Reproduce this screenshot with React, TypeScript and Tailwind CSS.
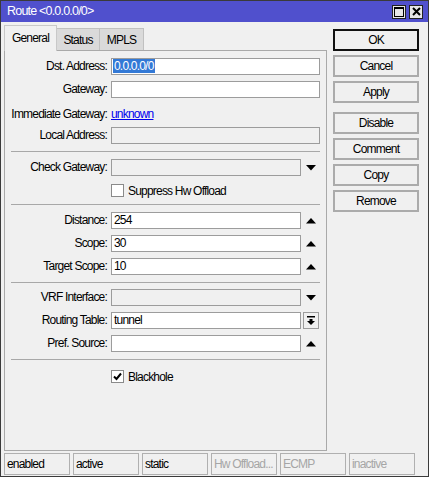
import React from "react";

const FONT = "font-['Liberation_Sans',Arial,sans-serif]";

function Down() {
  return (
    <svg width="10" height="6" viewBox="0 0 10 6">
      <polygon points="0,0 10,0 5,5.5" fill="#000" />
    </svg>
  );
}
function Up() {
  return (
    <svg width="10" height="6" viewBox="0 0 10 6">
      <polygon points="0,5.5 10,5.5 5,0" fill="#000" />
    </svg>
  );
}

function Label({ children }: { children: React.ReactNode }) {
  return <div className="w-[96px] shrink-0 flex justify-end leading-[17px] whitespace-nowrap">{children}</div>;
}

function Input({ value, disabled, w = "w-[209px]", selected }: { value?: string; disabled?: boolean; w?: string; selected?: boolean }) {
  return (
    <div
      className={`${w} h-[17px] border border-[#9c9c9c] ${disabled ? "bg-[#f0f0f0]" : "bg-white"} pl-[1px] leading-[15px] whitespace-nowrap overflow-hidden`}
    >
      {selected ? (
        <span className="bg-[#3379d6] text-white px-[1px] inline-block leading-[14px]">{value}</span>
      ) : (
        <span className="pl-[1px]">{value}</span>
      )}
    </div>
  );
}

function Row({ label, children, className = "" }: { label: string; children: React.ReactNode; className?: string }) {
  return (
    <div className={`flex items-center h-[17px] ${className}`}>
      <Label>{label}</Label>
      <div className="ml-[4px] flex items-center">{children}</div>
    </div>
  );
}

function Sep({ className = "" }: { className?: string }) {
  return <div className={`h-px bg-[#a8a8a8] w-[309px] ${className}`} />;
}

function Check({ checked }: { checked?: boolean }) {
  return (
    <div className="w-[13px] h-[13px] border border-[#8a8a8a] bg-white flex items-center justify-center">
      {checked && (
        <svg width="9" height="9" viewBox="0 0 9 9">
          <polyline points="1,4.5 3.5,7 8,1.5" fill="none" stroke="#000" strokeWidth="2" />
        </svg>
      )}
    </div>
  );
}

function Btn({ children, primary, className = "" }: { children: React.ReactNode; primary?: boolean; className?: string }) {
  return (
    <div
      className={`h-[22px] w-[86px] flex items-center justify-center bg-[#f0f0f0] ${
        primary ? "border-2 border-[#111]" : "border-2 border-[#ababab]"
      } ${className}`}
    >
      {children}
    </div>
  );
}

function Cell({ children, dim }: { children: React.ReactNode; dim?: boolean }) {
  return (
    <div className={`w-[66px] h-[22px] border border-[#b0b0b0] pl-[2px] leading-[20px] whitespace-nowrap overflow-hidden ${dim ? "text-[#a6a6a6]" : "text-black"}`}>
      {children}
    </div>
  );
}

export default function App() {
  return (
    <div className={`w-[429px] h-[477px] bg-[#f0f0f0] border border-[#3a3a3a] flex flex-col overflow-hidden text-[12px] tracking-[-0.8px] text-black ${FONT}`}>
      {/* title bar */}
      <div className="h-[21px] bg-[#5050cd] flex items-center pl-[6px] pr-[5px] text-white text-[12.5px] tracking-[-0.8px] shrink-0">
        <span className="flex-1 leading-[21px]">Route &lt;0.0.0.0/0&gt;</span>
        <div className="flex gap-[3px]">
          <div className="w-[14px] h-[14px] bg-[#e6e6e6] border border-[#222] flex items-center justify-center">
            <svg width="10" height="10" viewBox="0 0 10 10">
              <rect x="0.5" y="0.5" width="9" height="9" fill="none" stroke="#000" strokeWidth="1" />
              <rect x="0" y="0" width="10" height="2" fill="#000" />
            </svg>
          </div>
          <div className="w-[14px] h-[14px] bg-[#e6e6e6] border border-[#222] flex items-center justify-center">
            <svg width="9" height="9" viewBox="0 0 9 9">
              <path d="M1 1 L8 8 M8 1 L1 8" stroke="#000" strokeWidth="2" />
            </svg>
          </div>
        </div>
      </div>

      <div className="flex flex-1 min-h-0">
        {/* left tabs + panel */}
        <div className="ml-[3px] w-[323px] flex flex-col">
          <div className="mt-[3px] h-[25px] flex items-end shrink-0">
            <div className="h-[26px] w-[53px] bg-[#f0f0f0] border border-b-0 border-[#c8c8c8] flex items-center justify-center -mb-px relative z-10 leading-none pb-[2px]">
              General
            </div>
            <div className="h-[22px] w-[43px] bg-[#dadada] border border-b-0 border-l-0 border-[#c0c0c0] flex items-center justify-center">
              Status
            </div>
            <div className="h-[22px] w-[44px] bg-[#dadada] border border-b-0 border-l-0 border-[#c0c0c0] flex items-center justify-center">
              MPLS
            </div>
          </div>
          <div className="h-[401px] border border-[#a9a9a9] flex flex-col pl-[6px] pt-[7px]">
            <Row label="Dst. Address:">
              <Input value="0.0.0.0/0" selected />
            </Row>
            <Row label="Gateway:" className="mt-[6px]">
              <Input />
            </Row>
            <Row label="Immediate Gateway:" className="mt-[8px]">
              <span className="text-[#0000ee] underline leading-[17px]">unknown</span>
            </Row>
            <Row label="Local Address:" className="mt-[4px]">
              <Input disabled />
            </Row>
            <Sep className="mt-[7px]" />
            <Row label="Check Gateway:" className="mt-[7px]">
              <Input disabled w="w-[190px]" />
              <div className="w-[19px] flex justify-center"><Down /></div>
            </Row>
            <div className="flex items-center h-[17px] mt-[6px] pl-[100px]">
              <Check />
              <span className="ml-[4px]">Suppress Hw Offload</span>
            </div>
            <Sep className="mt-[5px]" />
            <Row label="Distance:" className="mt-[7px]">
              <Input value="254" w="w-[190px]" />
              <div className="w-[19px] flex justify-center"><Up /></div>
            </Row>
            <Row label="Scope:" className="mt-[6px]">
              <Input value="30" w="w-[190px]" />
              <div className="w-[19px] flex justify-center"><Up /></div>
            </Row>
            <Row label="Target Scope:" className="mt-[6px]">
              <Input value="10" w="w-[190px]" />
              <div className="w-[19px] flex justify-center"><Up /></div>
            </Row>
            <Sep className="mt-[7px]" />
            <Row label="VRF Interface:" className="mt-[6px]">
              <Input disabled w="w-[190px]" />
              <div className="w-[19px] flex justify-center"><Down /></div>
            </Row>
            <Row label="Routing Table:" className="mt-[6px]">
              <Input value="tunnel" w="w-[190px]" />
              <div className="ml-[2px] w-[16px] h-[17px] border border-[#9c9c9c] bg-[#f0f0f0] flex items-center justify-center">
                <svg width="8" height="9" viewBox="0 0 8 9">
                  <rect x="0" y="0" width="8" height="1.5" fill="#000" />
                  <rect x="2.5" y="3" width="3" height="2" fill="#000" />
                  <polygon points="0,5 8,5 4,9" fill="#000" />
                </svg>
              </div>
            </Row>
            <Row label="Pref. Source:" className="mt-[6px]">
              <Input w="w-[190px]" />
              <div className="w-[19px] flex justify-center"><Up /></div>
            </Row>
            <Sep className="mt-[7px]" />
            <div className="flex items-center h-[17px] mt-[8px] pl-[100px]">
              <Check checked />
              <span className="ml-[4px]">Blackhole</span>
            </div>
          </div>
        </div>

        {/* buttons */}
        <div className="ml-[6px] mt-[7px] flex flex-col">
          <Btn primary>OK</Btn>
          <Btn className="mt-[4px]">Cancel</Btn>
          <Btn className="mt-[4px]">Apply</Btn>
          <Btn className="mt-[9px]">Disable</Btn>
          <Btn className="mt-[4px]">Comment</Btn>
          <Btn className="mt-[4px]">Copy</Btn>
          <Btn className="mt-[4px]">Remove</Btn>
        </div>
      </div>

      {/* status bar */}
      <div className="mt-[2px] mb-[1px] ml-[3px] flex gap-[3px] shrink-0">
        <Cell>enabled</Cell>
        <Cell>active</Cell>
        <Cell>static</Cell>
        <Cell dim>Hw Offload...</Cell>
        <Cell dim>ECMP</Cell>
        <Cell dim>inactive</Cell>
      </div>
    </div>
  );
}
